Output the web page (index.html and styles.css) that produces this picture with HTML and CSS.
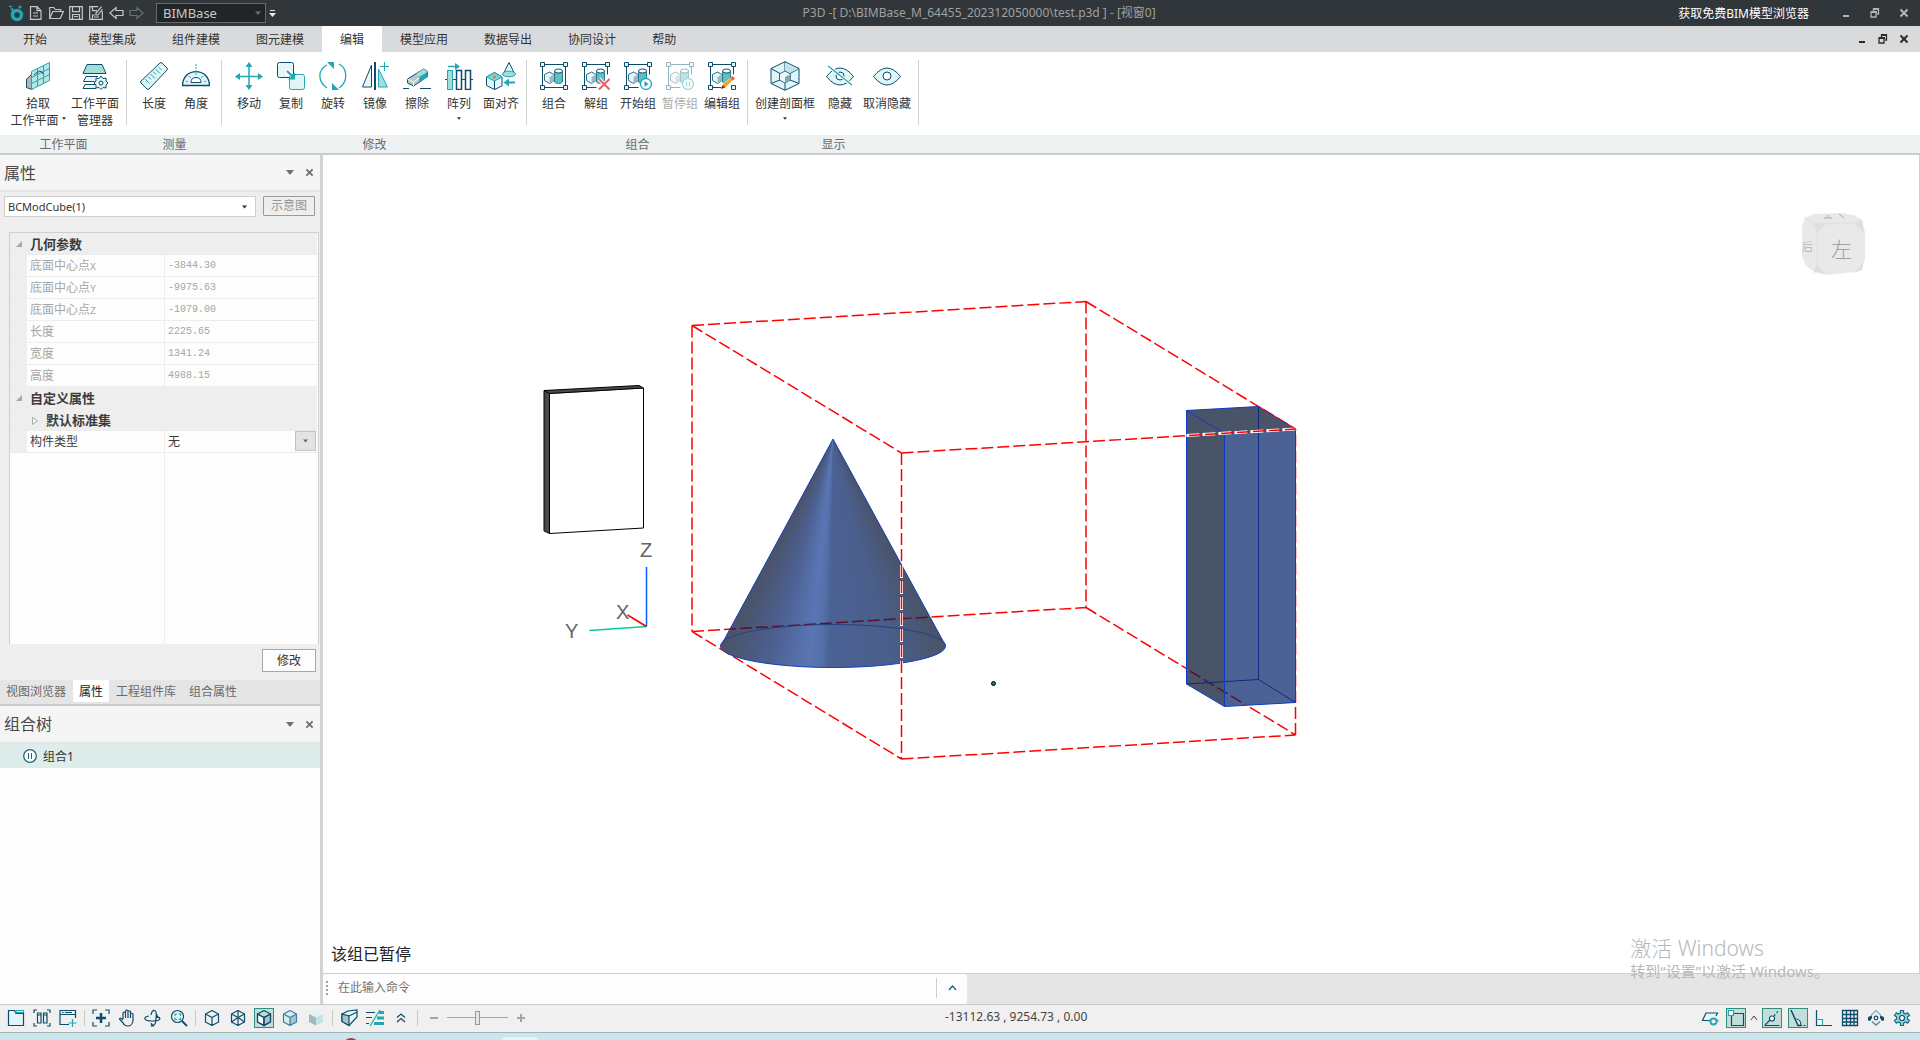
FILE: index.html
```html
<!DOCTYPE html>
<html lang="zh-CN">
<head>
<meta charset="utf-8">
<title>P3D - BIMBase</title>
<link rel="stylesheet" href="styles.css">
</head>
<body>
<svg class="defs" width="0" height="0" aria-hidden="true">
  <symbol id="frame" viewBox="0 0 28 28">
    <path d="M4.500 2.500h19M2.500 4.500v19M4.500 25.500h19M25.500 4.500v19" class="nv"/>
    <path d="M.5.5h4v4h-4zM23.500.5h4v4h-4zM.5 23.500h4v4h-4zM23.500 23.500h4v4h-4z" class="nv lt"/>
    <use href="#solids" width="28" height="28"/>
  </symbol>
  <symbol id="frame-open" viewBox="0 0 28 28">
    <path d="M4.500 2.500h19M2.500 4.500v19M4.500 25.500h10M25.500 4.500v8" class="nv"/>
    <path d="M.5.5h4v4h-4zM23.500.5h4v4h-4zM.5 23.500h4v4h-4z" class="nv lt"/>
    <use href="#solids" width="28" height="28"/>
  </symbol>
  <symbol id="solids" viewBox="0 0 28 28">
    <path d="M14.500 9v11c2 2 6 2 8 0V9z" fill="#5fc0c0" stroke="#2b7f92"/>
    <ellipse cx="18.500" cy="9" rx="4" ry="2" fill="#fff" stroke="#0f4c6c"/>
    <path d="M4.500 12.500l5-2.500 4.500 2.500v6l-4.500 3-5-3z" fill="#e8f6f8" stroke="#2b6f8a"/>
    <path d="M9.500 15l4.500-2.500v6l-4.500 3z" fill="#9fb9c2"/>
  </symbol>
  <symbol id="cube" viewBox="0 0 18 18">
    <path d="M9 1.500l6.500 3.500v8L9 16.500 2.500 13V5zM2.500 5L9 8.500 15.500 5M9 8.500v8" stroke-linejoin="round"/>
  </symbol>
  <symbol id="chev" viewBox="0 0 8 5"><path d="M0 0h8L4 5z" fill="currentColor"/></symbol>
  <symbol id="cross" viewBox="0 0 10 10"><path d="M1.500 1.500l7 7M8.500 1.500l-7 7" stroke="currentColor" stroke-width="2"/></symbol>
  <symbol id="restore" viewBox="0 0 10 10"><path d="M3.500 3V1h5v5H7M1 4h5v5H1z" fill="none" stroke="currentColor" stroke-width="1.300"/><path d="M3 1h6M1 4h6" stroke="currentColor" stroke-width="2"/></symbol>
  <symbol id="mini" viewBox="0 0 10 10"><path d="M2 8h6" stroke="currentColor" stroke-width="2"/></symbol>
</svg>

<div class="app">
  <header class="titlebar">
    <div class="quick">
      <span class="qbtn"><svg width="16" height="18" viewBox="0 0 16 18"><circle cx="9" cy="11" r="4.500" fill="none" stroke="#20a8b4" stroke-width="3.500"/><path d="M4.500 10V4M1 2.500h3M2.500 5.500h2M10.500 3h3M12 1.500v3" fill="none" stroke="#20a8b4" stroke-width="1.500"/></svg></span>
      <button class="qbtn" aria-label="新建"><svg width="14" height="14" viewBox="0 0 14 14"><path d="M1.500.7H8l4 4v8.600H1.500zM8 .7v4h4M4 7h5M4 10h5"/></svg></button>
      <button class="qbtn" aria-label="打开"><svg width="15" height="14" viewBox="0 0 15 14"><path d="M.7 12.500v-11h4l1.500 2h5.500v2M.7 12.500l3-7h10.600l-3 7z"/></svg></button>
      <button class="qbtn" aria-label="保存"><svg width="14" height="14" viewBox="0 0 14 14"><path d="M.7.7h12.600v12.600H.7zM3.500.7v5h7v-5M3.500 13V8.500h7V13M5 10.500h4"/></svg></button>
      <button class="qbtn" aria-label="另存为"><svg width="14" height="14" viewBox="0 0 14 14"><path d="M9 .7H.7v12.600h12.600V5M3.500.7v4H8M3.500 13V9H6M12.500.7L7 7v2h2l4.500-6M5 11h5"/></svg></button>
      <button class="qbtn" aria-label="撤销"><svg width="15" height="14" viewBox="0 0 15 14"><path d="M7 1.500v3h7v5H7v3L.9 7z"/></svg></button>
      <button class="qbtn dim" aria-label="重做"><svg width="15" height="14" viewBox="0 0 15 14"><path d="M8 1.500v3H1v5h7v3L14.100 7z"/></svg></button>
    </div>
    <div class="style-box">
      <select aria-label="模块"><option>BIMBase</option></select>
      <svg width="6" height="4" viewBox="0 0 8 5"><use href="#chev"/></svg>
    </div>
    <button class="qmore" aria-label="自定义"><svg width="7" height="7" viewBox="0 0 7 7"><path d="M1 0h5v1H1zM0 3h7L3.500 7z" fill="#eee"/></svg></button>
    <h1 class="doc-title">P3D -[ D:\BIMBase_M_64455_202312050000\test.p3d ] - [视窗0]</h1>
    <a class="get-link" href="#">获取免费BIM模型浏览器</a>
    <div class="winbtns">
      <button aria-label="最小化"><svg width="10" height="10"><use href="#mini"/></svg></button>
      <button aria-label="还原"><svg width="10" height="10"><use href="#restore"/></svg></button>
      <button aria-label="关闭"><svg width="10" height="10"><use href="#cross"/></svg></button>
    </div>
  </header>

  <nav class="menubar">
    <button class="menu first">开始</button><button class="menu">模型集成</button><button class="menu">组件建模</button><button class="menu">图元建模</button><button class="menu active">编辑</button><button class="menu">模型应用</button><button class="menu">数据导出</button><button class="menu">协同设计</button><button class="menu">帮助</button>
    <div class="winbtns child">
      <button aria-label="最小化视窗"><svg width="10" height="10"><use href="#mini"/></svg></button>
      <button aria-label="还原视窗"><svg width="10" height="10"><use href="#restore"/></svg></button>
      <button aria-label="关闭视窗"><svg width="10" height="10"><use href="#cross"/></svg></button>
    </div>
  </nav>

  <section class="ribbon">
    <div class="group g-plane">
      <div class="tools">
        <button class="tool"><svg width="28" height="28" viewBox="0 0 28 28"><path d="M2.500 17l5-4.500 5 2v10l-5 3-5-2z" fill="#a9b9bd" stroke="#0f4c6c"/><path d="M7.500 9.500L25.500.5v18l-18 9z" fill="#b5e6e4" stroke="#20a8b4"/><path d="M13.500 6.500v18M19.500 3.500v18M7.500 15.500l18-9M7.500 21.500l18-9" class="tl"/><path d="M10 13q7-7 9-1" class="nv"/></svg><span>拾取<br>工作平面<svg class="drop" width="4" height="3"><use href="#chev"/></svg></span></button>
        <button class="tool w58"><svg width="28" height="28" viewBox="0 0 28 28"><path d="M6 2.500h15l4 9H2z" fill="#9fdedb" stroke="#0f4c6c"/><path d="M17 14.500H5l-2.500 5h11M14 22.500H4l-2 4h13" class="nv lt"/><path d="M20 14l2 2.500 3-.5 0 3 2 2-2 2 0 3-3-.5-2 2-2-2-3 .5 0-3-2-2 2-2 0-3 3 .5z" fill="#dff5f8" stroke="#0f4c6c"/><circle cx="20" cy="21" r="2" class="nv"/></svg><span>工作平面<br>管理器</span></button>
        <i class="sep"></i>
      </div>
      <div class="group-name">工作平面</div>
    </div>
    <div class="group g-std">
      <div class="tools">
        <button class="tool w42"><svg width="28" height="28" viewBox="0 0 28 28"><path d="M1 19L20 1q1-1 2 0l5 5q1 1 0 2L9 27q-1 1-2 0l-6-6q-1-1 0-2z" fill="#dff5f8" stroke="#0f4c6c"/><path d="M5 17l4.500 4.500M8 14.500l3 3M10.500 12l4.500 4.500M13 9.500l3 3M15.500 7l4.500 4.500M18.500 5l3 3" class="tl"/></svg><span>长度</span></button>
        <button class="tool w42"><svg width="28" height="28" viewBox="0 0 28 28"><path d="M.5 23.500C1 5 27 5 27.500 23.500z" fill="#dff5f8" stroke="#0f4c6c" stroke-width="1.300"/><path d="M9 20.500q0-5 5-5t5 5z" fill="#fff" stroke="#0f4c6c"/><path d="M14 2v11" class="tl" stroke-dasharray="2 1"/><path d="M4 19l2 1M24 19l-2 1M7 14l2 2M21 14l-2 2" class="tl"/></svg><span>角度</span></button>
        <i class="sep"></i>
      </div>
      <div class="group-name">测量</div>
    </div>
    <div class="group g-std">
      <div class="tools">
        <button class="tool w42"><svg width="28" height="28" viewBox="0 0 28 28"><path d="M14 2v24M2 14.500h24" class="tl" stroke-width="1.500"/><path d="M14 0l3.500 5h-7zM14 28l3.500-5h-7zM0 14.500l5-3.500v7zM28 14.500l-5-3.500v7z" fill="#20a8b4"/></svg><span>移动</span></button>
        <button class="tool w42"><svg width="28" height="28" viewBox="0 0 28 28"><rect x=".5" y=".5" width="16" height="15" rx="2" fill="#e4f7fa" stroke="#0f4c6c"/><rect x="12.500" y="12.500" width="15" height="15" rx="2" fill="#dff5f8" stroke="#20a8b4"/><path d="M9 8h5v6h-5z" fill="#fff"/><path d="M10 9l6 6" stroke="#20a8b4" stroke-width="2"/><path d="M18 10.500v7h-7z" fill="#20a8b4"/></svg><span>复制</span></button>
        <button class="tool w42"><svg width="28" height="28" viewBox="0 0 28 28"><path d="M8 26C-1 20-2 8 8 3M20 2c9 5 9 18 0 24" class="tl" stroke-width="1.300"/><path d="M8 0h7v7zM13 21v7h7z" fill="#20a8b4"/></svg><span>旋转</span></button>
        <button class="tool w42"><svg width="28" height="28" viewBox="0 0 28 28"><path d="M10.500 3v22H1.500z" fill="#e4f7fa" stroke="#0f4c6c"/><path d="M17.500 7v18h9z" fill="#9fdedb" stroke="#20a8b4"/><path d="M14 0v28" stroke="#0f4c6c" stroke-width="2"/><path d="M23.500 0v9M19 4.500h9" class="tl"/></svg><span>镜像</span></button>
        <button class="tool w42"><svg width="28" height="28" viewBox="0 0 28 28"><path d="M4.500 17l16-10 4 2.500v5l-14 9.500-6-3z" fill="#b8c8cc" stroke="#0f4c6c"/><path d="M13 12l7.500-5 4 2.500-8 5z" fill="#9fdedb"/><path d="M16 15l8.500-5v5L16 21z" fill="#20a8b4"/><path d="M4.500 17l6 3v4M10.500 20l6-4" stroke="#fff" fill="none"/><path d="M0 26.500h6M17 26.500h11" class="nv"/></svg><span>擦除</span></button>
        <button class="tool w42"><svg width="28" height="28" viewBox="0 0 28 28"><rect x="2.500" y="8.500" width="5" height="19" fill="#9fdedb" stroke="#20a8b4"/><path d="M11.500 8.500h5v19h-5zM20.500 8.500h5v19h-5z" class="nv" stroke-width="1.500"/><path d="M0 17.500h2M8 17.500h3.500M16.500 17.500h4M25.500 17.500H28" class="nv"/><path d="M3 4.500h8" stroke="#20a8b4" stroke-width="1.500"/><path d="M10 1l5 3.500-5 3.500z" fill="#20a8b4"/></svg><span>阵列<br><svg class="drop low" width="4" height="3"><use href="#chev"/></svg></span></button>
        <button class="tool w42"><svg width="30" height="28" viewBox="0 0 30 28"><path d="M.5 15l8-4.500 7.500 4.500v9L8.500 27.500l-8-4z" fill="#e4f7fa" stroke="#0f4c6c"/><path d="M.5 15l8-4.500 7.500 4.500-7.500 4z" fill="#7fd3c8" stroke="#20a8b4"/><path d="M8.500 19v8.500" stroke="#0f4c6c"/><circle cx="8.500" cy="15" r="1.200" fill="#f25b5b"/><path d="M23 .5l6 12q-6 4-12 0z" fill="#dff5f8" stroke="#0f4c6c"/><ellipse cx="23" cy="12" rx="6.500" ry="2.800" fill="#9fdedb" stroke="#20a8b4"/><path d="M22 20.500h7" stroke="#20a8b4" stroke-width="2"/><path d="M17.500 20.500l5.500-4v8z" fill="#20a8b4"/></svg><span>面对齐</span></button>
        <i class="sep"></i>
      </div>
      <div class="group-name">修改</div>
    </div>
    <div class="group g-std">
      <div class="tools">
        <button class="tool w42"><svg width="28" height="28"><use href="#frame"/></svg><span>组合</span></button>
        <button class="tool w42"><svg width="28" height="28" viewBox="0 0 28 28"><use href="#frame-open"/><path d="M17 17l10.500 10.500M27.500 17L17 27.500" stroke="#fff" stroke-width="4"/><path d="M17 17l10.500 10.500M27.500 17L17 27.500" stroke="#f25b5b" stroke-width="2"/></svg><span>解组</span></button>
        <button class="tool w42"><svg width="28" height="28" viewBox="0 0 28 28"><use href="#frame-open"/><circle cx="22" cy="22" r="5.500" fill="#fff" stroke="#20a8b4" stroke-width="1.300"/><path d="M20.500 19l4 3-4 3z" fill="#20a8b4"/></svg><span>开始组</span></button>
        <button class="tool w42" disabled><svg width="28" height="28" viewBox="0 0 28 28"><use href="#frame-open"/><circle cx="22" cy="22" r="5.500" fill="#fff" stroke="#20a8b4" stroke-width="1.300"/><path d="M20.500 19.500v5M23.500 19.500v5" stroke="#20a8b4" stroke-width="1.300"/></svg><span>暂停组</span></button>
        <button class="tool w42"><svg width="28" height="28" viewBox="0 0 28 28"><use href="#frame-open"/><path d="M23.500 23.500h4v4h-4z" class="nv lt"/><path d="M13 27l2-5 9-7 2 2-8 8z" fill="#f5a21d" stroke="#fff" stroke-width=".5"/><path d="M22.500 16l2-2 2.500 2.500-2 2z" fill="#f25b5b"/><path d="M13 27l1.500-4 3 2.500z" fill="#6b3a1e"/></svg><span>编辑组</span></button>
        <i class="sep"></i>
      </div>
      <div class="group-name">组合</div>
    </div>
    <div class="group g-show">
      <div class="tools">
        <button class="tool w66"><svg class="tall" width="30" height="30" viewBox="0 0 30 30"><path d="M15 .7l14 6.800v15L15 29.300 1 22.500v-15z" fill="#dff5f8" stroke="#0f4c6c"/><path d="M15 .7v10M1 7.500l9 5M29 7.500l-9 5M1 22.500l9-3.500M29 22.500L20 19M15 22v7" class="nv"/><path d="M15 2l13 6-8 4-5-2z" fill="#bfe3e8"/><path d="M9.500 13l5.500-3 5.500 3v6L15 22l-5.500-3z" fill="#eef8fa" stroke="#2b6f8a"/><path d="M15 16l5.500-3v6L15 22z" fill="#8ba6b0"/></svg><span>创建剖面框<br><svg class="drop low" width="4" height="3"><use href="#chev"/></svg></span></button>
        <button class="tool w44"><svg width="28" height="28" viewBox="0 0 28 28"><path d="M.5 14.500q13.500-17 27 0-13.500 17-27 0z" fill="#dff5f8" stroke="#0f4c6c"/><circle cx="14" cy="14" r="4" fill="#fff" stroke="#0f4c6c"/><path d="M2 4l24 19" stroke="#fff" stroke-width="3"/><path d="M2 4l24 19" class="tl" stroke-width="1.300"/></svg><span>隐藏</span></button>
        <button class="tool w50"><svg width="28" height="28" viewBox="0 0 28 28"><path d="M.5 14.500q13.500-17 27 0-13.500 17-27 0z" fill="#dff5f8" stroke="#0f4c6c"/><circle cx="14" cy="14" r="4" fill="#fff" stroke="#0f4c6c"/></svg><span>取消隐藏</span></button>
        <i class="sep"></i>
      </div>
      <div class="group-name">显示</div>
    </div>
    <div class="group rest"><div class="tools"></div><div class="group-name"></div></div>
  </section>

  <main class="work">
    <aside class="side">
      <section class="panel props">
        <div class="panel-head"><h2>属性</h2><button aria-label="菜单"><svg width="8" height="5"><use href="#chev"/></svg></button><button aria-label="关闭属性"><svg width="9" height="9"><use href="#cross"/></svg></button></div>
        <div class="pick">
          <div class="combo"><select aria-label="对象"><option>BCModCube(1)</option></select><svg width="5" height="4"><use href="#chev"/></svg></div>
          <button class="sketch">示意图</button>
        </div>
        <div class="sheet">
          <table>
            <colgroup><col class="c0"><col class="c1"><col></colgroup>
            <tr class="sec"><td><svg width="6" height="6" viewBox="0 0 6 6"><path d="M6 0v6H0z" fill="#a8a8a8"/></svg></td><th colspan="2">几何参数</th></tr>
            <tr><td></td><td>底面中心点<span class="num">X</span></td><td class="num">-3844.30</td></tr>
            <tr><td></td><td>底面中心点<span class="num">Y</span></td><td class="num">-9975.63</td></tr>
            <tr><td></td><td>底面中心点<span class="num">Z</span></td><td class="num">-1079.00</td></tr>
            <tr><td></td><td>长度</td><td class="num">2225.65</td></tr>
            <tr><td></td><td>宽度</td><td class="num">1341.24</td></tr>
            <tr><td></td><td>高度</td><td class="num">4988.15</td></tr>
            <tr class="sec"><td><svg width="6" height="6" viewBox="0 0 6 6"><path d="M6 0v6H0z" fill="#a8a8a8"/></svg></td><th colspan="2">自定义属性</th></tr>
            <tr class="sec sub"><td></td><th colspan="2"><svg width="6" height="8" viewBox="0 0 6 8"><path d="M.5.5l5 3.500-5 3.500z" fill="#fff" stroke="#aaa"/></svg>默认标准集</th></tr>
            <tr class="edit"><td></td><td><label for="ctype">构件类型</label></td><td><div class="cell-combo"><select id="ctype"><option>无</option></select><span><svg width="5" height="4"><use href="#chev"/></svg></span></div></td></tr>
          </table>
          <div class="blank"><div></div></div>
        </div>
        <div class="apply"><button>修改</button></div>
        <div class="side-tabs"><button>视图浏览器</button><button class="on">属性</button><button>工程组件库</button><button>组合属性</button></div>
      </section>
      <section class="panel tree">
        <div class="panel-head"><h2>组合树</h2><button aria-label="菜单"><svg width="8" height="5"><use href="#chev"/></svg></button><button aria-label="关闭组合树"><svg width="9" height="9"><use href="#cross"/></svg></button></div>
        <ul><li><svg width="14" height="14" viewBox="0 0 14 14"><circle cx="7" cy="7" r="6.300" fill="#fff" stroke="#1f6685" stroke-width="1.300"/><path d="M5.500 4v6M8.500 4v6" stroke="#1f6685"/></svg>组合1</li></ul>
      </section>
    </aside>

    <div class="stage">
      <div class="viewport">
        <svg class="scene" viewBox="323 155 1596 818">
          <defs><clipPath id="coneClip"><path d="M833 439L720.500 646.500A112.500 21.500 0 0 0 945.500 645.500z"/></clipPath></defs>
          <path d="M544 390.500l95-5 4.500 3-94 5.500z" fill="#4a4a4a"/><path d="M544 390.500l5.500 3V533.500l-5.500-3z" fill="#4a4a4a"/>
          <path d="M549.500 393.500l94-5.500v140l-94 5.500zM549.500 393.500l-5.500-3V531l5.500 2.500M544 390.500l95-5 4.500 2.500" fill="none" stroke="#000"/>
          <path d="M646.500 626.500v-59.500" stroke="#0a60ff" stroke-width="1.500"/><path d="M646.500 626.500l-57 4" stroke="#00cfa2" stroke-width="1.500"/><path d="M646.500 626.500l-19-11.500" stroke="#f00" stroke-width="1.500"/>
          <g class="axis"><text x="640" y="557">Z</text><text x="616" y="619">X</text><text x="565" y="638">Y</text></g>
          <g class="dash">
            <path d="M692 325.500l394-24M1086 301.500V607.500M1086 301.500l209.500 127.500M692 325.500v306M692 325.500l209.500 127.500M692 631.500l394-24M692 631.500l209.500 127.500M901.500 759l394-24M1086 607.500l209.500 127.500M1295.500 735V429"/>
          </g>
          <g clip-path="url(#coneClip)">
            <foreignObject x="720" y="439" width="226" height="230"><div class="cone-fill"></div></foreignObject>
            <path d="M692 631.500l394-24" stroke="#5c0f2e" stroke-width="1.500" stroke-dasharray="12 4"/>
          </g>
          <path d="M720.500 646.500A112.500 21.500 0 0 1 945.500 645.500" fill="none" stroke="#2a3f80" stroke-width="1"/>
          <path d="M833 439L720.500 646.500A112.500 21.500 0 0 0 945.500 645.500z" fill="none" stroke="#1040c0"/>
          <path d="M1186.500 410.500l72-4 37 22.500-71 4.500zM1186.500 410.500l38 23v273l-38-22.500z" fill="#4a5468"/>
          <path d="M1224.500 433.500l71-4.500v273.500l-71 4z" fill="#4d6294"/>
          <path d="M1190 671l55 33.500" stroke="#5c0f2e" stroke-width="1.500" stroke-dasharray="12 4"/>
          <path d="M1258.500 406.500v273l37 23M1258.500 679.500l-72 4.500" fill="none" stroke="#082a85"/>
          <path d="M1186.500 410.500l72-4 37 22.500-71 4.500zM1186.500 410.500V684l38 22.500v-273M1224.500 706.500l71-4V429" fill="none" stroke="#0a3cc4"/>
          <path d="M901.500 565v99M1186.500 435.500l109-6.500" stroke="#fff" stroke-width="3" stroke-dasharray="13 3"/>
          <g class="dash"><path d="M901.500 453v306M901.500 453l394-24"/><path d="M1258.500 406.500l37 22.500" opacity=".5"/></g>
          <circle cx="993.500" cy="683.500" r="2" fill="#1d7a78" stroke="#000"/>
          <g class="viewcube">
            <path d="M1805 218l8-4 30-1 11 2 8 5 3 12v27l-3 9-7 4-28 3-12-3-9-6-4-10v-30z" fill="#e9e9e9"/>
            <path d="M1814 223l12 1-9 9zM1854 223l8-3 2 13zM1817 264l9 10-12-2zM1864 262l-2 8-8 3z" fill="#dedede"/>
            <path d="M1805 218l10 6 38-1 9-3M1815 224l2 9v32l-3 8" fill="none" stroke="#e0e0e0"/>
            <path d="M1824 218h8M1828 215v2M1839 214l5 4" stroke="#a5a5a5" fill="none"/>
            <text x="1831" y="257" font-size="21">左</text><text x="1802" y="251" font-size="11">后</text>
          </g>
        </svg>
        <p class="hint">该组已暂停</p>
      </div>
      <div class="cmd-row">
        <div class="cmd"><i class="grip"></i><input type="text" aria-label="命令" placeholder="在此输入命令"><button aria-label="展开"><svg width="9" height="6" viewBox="0 0 9 6"><path d="M1 5l3.500-4L8 5" fill="none" stroke="#1f5c80" stroke-width="1.300"/></svg></button></div>
      </div>
      <div class="watermark"><b>激活 Windows</b><span>转到“设置”以激活 Windows。</span></div>
    </div>
  </main>

  <footer class="status">
    <div class="icons">
      <button aria-label="文件"><svg width="18" height="18" viewBox="0 0 18 18"><path d="M1.500 16.500v-15h6l1.500 3h7.500v12z" fill="#dff5f8"/><path d="M9 1.500h7.500v2H9z" stroke="#20a8b4"/></svg></button>
      <button aria-label="平铺"><svg width="18" height="18" viewBox="0 0 18 18"><path d="M1 4V1h3M14 1h3v3M1 14v3h3M14 17h3v-3M4.500 4h3.500v10H4.500zM10.500 4H14v10h-3.500zM4.500 6H8M10.500 6H14"/></svg></button>
      <button aria-label="新建视窗"><svg width="18" height="18" viewBox="0 0 18 18"><path d="M16.500 9V1.500H1v14h9M1 5.500h15.500M3 3.500h1.500M6 3.500h7"/><path d="M13.500 10v8M9.500 14h8" stroke="#20a8b4"/></svg></button>
      <i></i>
      <button aria-label="全图"><svg width="18" height="18" viewBox="0 0 18 18"><path d="M1 5V1h4M13 1h4v4M1 13v4h4M13 17h4v-4"/><path d="M9 4v10M4 9h10" stroke-width="2.500"/></svg></button>
      <button aria-label="平移"><svg width="18" height="18" viewBox="0 0 18 18"><path d="M5 10V4q1.200-2 2.500 0V2q1.200-2 2.500 0v2-1.500q1.300-1.500 2.500 0V5q1.300-1.500 2.500 0v7q-1 5-5 5-3.500 0-5-3L1.500 10q1-2 3.500 1M7.500 4v5M10 3v6M12.500 5v4" stroke-linejoin="round"/></svg></button>
      <button aria-label="旋转视图"><svg width="18" height="18" viewBox="0 0 18 18"><path d="M7 6q1-5 3.500-4.500T12 9q0 7-3 7.500L7 14M5 7q-5 1-4 3t7 2q8 0 8-2.500L13 7M7.500 14.500v2.500h2.500M13 5.500v3h3"/></svg></button>
      <button aria-label="窗选缩放"><svg width="18" height="18" viewBox="0 0 18 18"><circle cx="7.500" cy="7.500" r="6" fill="#e4f7fa"/><path d="M12 12l5 5" stroke-width="1.800"/><path d="M5 7V5h2M8.500 5h2v2M5 8.500v2h2M10.500 8.500v2h-2" stroke="#20a8b4"/></svg></button>
      <i></i>
      <button aria-label="线框"><svg width="18" height="18" fill="#fff"><use href="#cube"/></svg></button>
      <button aria-label="透明线框"><svg width="18" height="18" viewBox="0 0 18 18"><use href="#cube"/><path d="M9 1.500v7L2.500 13M9 8.500l6.500 4.500"/></svg></button>
      <button class="on" aria-label="真实感"><svg width="18" height="18" viewBox="0 0 18 18"><path d="M2.500 5L9 8.500v8L2.500 13z" fill="#fff"/><path d="M9 8.500L15.500 5v8L9 16.500z" fill="#a9c4c8"/><use href="#cube"/></svg></button>
      <button aria-label="着色"><svg width="18" height="18" viewBox="0 0 18 18" class="flat"><path d="M2.500 5L9 1.500 15.500 5v8L9 16.500 2.500 13z" fill="#d3edf1"/><path d="M9 8.500L15.500 5v8L9 16.500z" fill="#a9c4cc"/><use href="#cube" stroke="#3f7d9e"/></svg></button>
      <button aria-label="着色无边"><svg width="18" height="18" viewBox="0 0 18 18" class="flat"><path d="M2 5l7-3.500L16 5 9 8.500z" fill="#dff5f8"/><path d="M2 5l7 3.500v8L2 13z" fill="#a3b9be"/><path d="M9 8.500L16 5v8l-7 3.500z" fill="#c3e3e6"/></svg></button>
      <i></i>
      <button aria-label="剖切"><svg width="18" height="18" viewBox="0 0 18 18"><path d="M2 5l6-3 9-1v7l-8 8.500-7-4z" fill="#e4f7fa"/><path d="M2 5l7 2v9.500l-7-4z" fill="#a9c0c4"/><path d="M9 7l8-4"/></svg></button>
      <button aria-label="线宽"><svg width="18" height="18" viewBox="0 0 18 18"><path d="M0 3.500h9M0 8.500h6M0 14.500h3"/><path d="M4 17L14 1" stroke="#20a8b4"/><path d="M13 3.500h5M11 9h7M8 14.500h10" stroke="#20a8b4" stroke-width="3"/></svg></button>
      <button aria-label="更多"><svg width="18" height="18" viewBox="0 0 18 18"><path d="M5 8.500L9 5l4 3.500M5 13l4-3.500 4 3.500"/></svg></button>
      <i></i>
    </div>
    <div class="zoom"><button aria-label="缩小"><svg width="8" height="8" viewBox="0 0 8 8"><path d="M0 4h8"/></svg></button><input type="range" aria-label="缩放" min="0" max="100" value="50"><button aria-label="放大"><svg width="8" height="8" viewBox="0 0 8 8"><path d="M0 4h8M4 0v8"/></svg></button></div>
    <output class="coords">-13112.63 , 9254.73 , 0.00</output>
    <div class="icons right">
      <button aria-label="显示平面"><svg width="18" height="18" viewBox="0 0 18 18"><path d="M9 11.500H1.500L5 4h11.500L15 7" fill="#e4f7fa"/><circle cx="12.500" cy="12.500" r="3" stroke="#20a8b4" stroke-width="1.800"/><path d="M7.500 12.500l2-2M17.500 12.500l-2-2" stroke="#20a8b4"/></svg></button>
      <button class="on" aria-label="捕捉"><svg width="18" height="18" viewBox="0 0 18 18"><path d="M7 4.500h9.500v12h-12V7"/><path d="M1.500 1.500h5v5h-5z" fill="#fff" stroke="#20a8b4"/></svg></button>
      <button class="tiny" aria-label="捕捉设置"><svg width="8" height="6" viewBox="0 0 8 6"><path d="M1 5l3-4 3 4"/></svg></button>
      <button class="on" aria-label="极轴"><svg width="18" height="18" viewBox="0 0 18 18"><path d="M1.500 16.500h15M2 16l5-5"/><circle cx="9" cy="9.500" r="2.500" fill="#fff"/><path d="M11 7l5-6" stroke-dasharray="2 2"/></svg></button>
      <button class="on" aria-label="角度"><svg width="18" height="18" viewBox="0 0 18 18"><path d="M2 1l7 15.500h3" stroke-width="1.500"/><path d="M6.500 10q5 0 5.500 6" fill="#fff"/><path d="M11 16.500h6" stroke-dasharray="2 1.500"/></svg></button>
      <button aria-label="正交"><svg width="18" height="18" viewBox="0 0 18 18"><path d="M1.500 1v15.500H17"/><path d="M1.500 10.500h6v6" fill="#fff" stroke="#20a8b4"/></svg></button>
      <button aria-label="栅格"><svg width="18" height="18" viewBox="0 0 18 18"><path d="M1.500 1.500h15v15h-15zM5.500 1.500v15M9.500 1.500v15M13 1.500v15M1.500 5.500h15M1.500 9.500h15M1.500 13h15" stroke-width="1.300"/></svg></button>
      <button aria-label="视点"><svg width="18" height="18" viewBox="0 0 18 18"><path d="M4 6.500l5-5 5 5" stroke="#9ab3bf" stroke-width="1.500"/><circle cx="9" cy="9" r="1.800"/><path d="M5 12.500l4 3.500 4-3.500" stroke="#5d87a0" stroke-width="1.500"/><path d="M1 8l4-1.500V9L3 12 1 11.500zM17 8l-4-1.500V9l2 3 2-.5z" fill="#0f4c6c" stroke="none"/></svg></button>
      <button aria-label="设置"><svg width="18" height="18" viewBox="0 0 18 18"><path d="M7.500 1.500h3v2.300l2.200 1.200 2-1.200L16.500 6.500l-2 1.300v2.400l2 1.300-1.800 2.700-2-1.200-2.200 1.200v2.300h-3v-2.300L5.300 13l-2 1.200L1.500 11.500l2-1.300V7.800l-2-1.300 1.800-2.700 2 1.200 2.200-1.200z" fill="#8fd6dc" stroke="#1f6685"/><circle cx="9" cy="9" r="2.500" fill="#fff"/></svg></button>
    </div>
  </footer>
  <div class="taskbar"><svg width="600" height="7" viewBox="0 0 600 7"><circle cx="351" cy="13" r="8" fill="#a83a45"/><rect x="502" y="4" width="36" height="8" rx="3" fill="#e3f3f6"/></svg></div>
</div>
</body>
</html>
```
FILE: styles.css
```css
* { box-sizing: border-box; }
body {
  margin: 0;
  background: #fff;
  color: #333;
  font: 12px/17px "Noto Sans", "Noto Sans CJK SC", sans-serif;
}
h1, h2, p, ul { margin: 0; padding: 0; font-weight: normal; }
ul { list-style: none; }
button, select, input {
  margin: 0; padding: 0; border: 0; border-radius: 0;
  background: transparent; color: inherit; font: inherit; outline: 0;
}
select { appearance: none; }
svg { display: block; }
.defs { position: absolute; }
.nv { fill: none; stroke: #0f4c6c; }
.tl { fill: none; stroke: #20a8b4; }
.lt { fill: #e4f7fa; }

.app { display: flex; flex-direction: column; height: 100vh; overflow: hidden; }

/* title bar */
.titlebar {
  display: flex; align-items: center; flex: none;
  height: 26px; padding-left: 6px; background: #30363a; color: #a0a0a0;
}
.quick { display: flex; }
.qbtn { display: flex; justify-content: center; align-items: center; width: 20px; height: 20px; }
button.qbtn svg { fill: none; stroke: #c4c8ca; stroke-width: 1.2; }
button.qbtn.dim svg { stroke: #6c7174; }
.style-box {
  display: flex; align-items: center; width: 110px; height: 20px;
  margin-left: 10px; padding: 0 4px 0 6px;
  background: #222526; border: 1px solid #6a6a6a; color: #6f7375;
}
.style-box select { flex: 1; min-width: 0; font-size: 13px; line-height: 18px; color: #c8c8c8; }
.qmore { margin-left: 3px; }
.doc-title { flex: 1; text-align: center; font-size: 12px; line-height: 26px; padding-left: 124px; }
.get-link { color: #fff; text-decoration: none; margin-left: 120px; padding-right: 22px; }
.winbtns { display: flex; }
.winbtns button { display: flex; justify-content: center; width: 29px; color: #b4b4b4; }
.titlebar .winbtns { padding-right: 2px; }
.winbtns.child { margin-left: auto; align-items: center; padding-right: 6px; }
.winbtns.child button { width: 21px; color: #2a2a2a; }

/* ribbon tabs */
.menubar { display: flex; flex: none; height: 26px; background: #d9dadc; }
.menu { padding: 2px 18px 0; line-height: 24px; }
.menu.first { padding: 2px 23px 0; }
.menu.active { background: #fff; }

/* ribbon */
.ribbon { display: flex; flex: none; height: 103px; border-bottom: 2px solid #cbccce; }
.tools { display: flex; height: 83px; padding: 8px 0 0 6px; }
.g-plane .tools { padding-left: 10px; }
.g-plane .sep { margin-left: 2px; }
.g-show .tools { padding-left: 4px; }
.g-show .sep { margin-left: 6px; }
.sep { width: 1px; height: 65px; margin-left: 4px; background: #d2d2d2; }
.group-name { height: 18px; padding-top: 1px; line-height: 18px; text-align: center; background: #edf1f2; color: #6b6b6b; }
.rest { flex: 1; }
.tool { display: flex; flex-direction: column; align-items: center; gap: 5px; width: 56px; padding-top: 2px; white-space: nowrap; }
.tool .tall { margin: -1px 0; }
.tool .drop { display: inline-block; vertical-align: 5px; margin-left: 3px; }
.tool .drop.low { margin-left: 0; }
.tool:disabled { opacity: .42; }
.w58 { width: 58px; }
.w42 { width: 42px; }
.w66 { width: 66px; }
.w44 { width: 44px; }
.w50 { width: 50px; }

/* work area */
.work { display: flex; flex: 1; min-height: 0; }
.side {
  display: grid; grid-template-rows: 551fr 298fr; flex: none;
  width: 323px; border-right: 3px solid #d3d3d3; background: #fdfdfd;
}
.panel { display: flex; flex-direction: column; min-height: 0; }
.panel-head {
  display: flex; align-items: center; gap: 11px; flex: none; height: 37px;
  padding: 0 6px 0 4px; background: #f5f5f5; border-bottom: 2px solid #e6e6e6; color: #707070;
}
.panel-head h2 { flex: 1; font-size: 16px; line-height: 34px; color: #484848; }
.props { background: #eee; }
.pick { display: flex; gap: 7px; padding: 4px 5px 15px 4px; }
.combo { display: flex; align-items: center; flex: 1; height: 21px; padding: 0 8px 0 3px; background: #fff; border: 1px solid #cfcfcf; }
.combo select { flex: 1; font-size: 11px; }
.sketch { width: 52px; height: 20px; border: 1px solid #9a9a9a; border-radius: 1px; color: #949494; line-height: 18px; }
.sheet { display: flex; flex-direction: column; flex: 1; min-height: 0; margin: 0 1px 0 9px; padding-right: 1px; background: #fdfdfd; border: 1px solid #cfcfcf; border-bottom: 0; }
.sheet table { width: 100%; border-spacing: 0; table-layout: fixed; color: #a6a6a6; }
.c0 { width: 17px; }
.c1 { width: 138px; }
.sheet tr { height: 22px; }
.sheet td, .sheet th { height: 22px; padding: 0 0 0 3px; line-height: 20px; border-bottom: 1px solid #ececec; text-align: left; }
.sheet td:first-child { background: #eee; }
.sheet td:nth-child(2) { border-right: 1px solid #ececec; }
.sheet td:first-child svg { margin-left: 3px; }
.sheet .sec th { background: #eee; color: #3c3c3c; font-size: 13px; font-weight: bold; }
.sheet .sub svg { display: inline-block; margin: 0 8px 0 2px; }
.sheet .edit { color: #3c3c3c; }
.num { font-family: "Liberation Mono", monospace; font-size: 10px; }
span.num { line-height: 10px; }
.cell-combo { display: flex; height: 21px; }
.cell-combo select { flex: 1; }
.cell-combo span { display: flex; align-items: center; justify-content: center; width: 21px; height: 20px; margin-right: 1px; background: #e3e3e3; border: 1px solid #c2c2c2; color: #666; }
.blank { flex: 1; }
.blank div { width: 155px; height: 100%; border-right: 1px solid #ececec; }
.apply { display: flex; justify-content: flex-end; padding: 5px 4px 8px; }
.apply button { width: 54px; height: 23px; background: #fdfdfd; border: 1px solid #a8a8a8; line-height: 21px; }
.side-tabs { display: flex; gap: 1px; flex: none; height: 26px; padding-bottom: 2px; background: #e5e5e5; border-bottom: 2px solid #cbcbcb; color: #6a6a6a; }
.side-tabs button { padding: 0 6px; line-height: 21px; }
.side-tabs .on { background: #fff; color: #222; }
.tree .panel-head { height: 38px; }
.tree li { display: flex; align-items: center; gap: 6px; height: 24px; padding-left: 23px; background: #deecea; }

/* model view */
.stage { position: relative; display: flex; flex-direction: column; flex: 1; min-width: 0; background: #e5e5e5; }
.viewport { position: relative; flex: 1; min-height: 0; background: #fff; border-right: 1px solid #d0d0d0; border-bottom: 1px solid #d0d0d0; }
.scene { width: 100%; height: 100%; }
.dash { fill: none; stroke: #f00; stroke-width: 1.5; stroke-dasharray: 12 4; }
.axis { font: 20px "Liberation Sans", sans-serif; fill: #666; }
.viewcube text { fill: #a0a0a0; font-weight: 300; }
.cone-fill {
  width: 226px; height: 230px;
  background: conic-gradient(at 113px 0, #4a5265 151deg, #4a5878 157deg, #4b5f8c 166deg, #4b6296 181deg, #5470a8 183deg, #5a75b3 186deg, #5570aa 189deg, #4c6091 196deg, #4a5878 203deg, #4a5265 209deg);
}
.hint { position: absolute; left: 8px; bottom: 7px; font-size: 16px; line-height: 24px; color: #222; }
.cmd-row { flex: none; height: 30px; }
.cmd { display: flex; align-items: center; width: 644px; height: 30px; padding-bottom: 2px; background: #fdfdfd; border-radius: 3px; }
.grip { width: 2px; height: 14px; margin: 0 10px 0 3px; background: repeating-linear-gradient(#a0a0a0 0 2px, transparent 2px 4px); }
.cmd input { flex: 1; line-height: 20px; }
.cmd input::placeholder { color: #747474; opacity: 1; }
.cmd button { display: flex; justify-content: center; align-items: center; width: 31px; height: 20px; border-left: 1px solid #cfcfcf; }
.watermark { position: absolute; right: 91px; bottom: 22px; display: flex; flex-direction: column; color: #b8b8b8; }
.watermark b { font-size: 21px; line-height: 24px; font-weight: 300; }
.watermark span { font-size: 15px; line-height: 22px; }

/* status bar */
.status { display: flex; align-items: center; flex: none; height: 29px; padding-bottom: 2px; background: #f0f0f0; border-top: 1px solid #cacaca; border-bottom: 1px solid #a5b2b6; }
.icons { display: flex; align-items: center; gap: 6px; padding-left: 6px; }
.icons button { display: flex; align-items: center; justify-content: center; width: 20px; height: 20px; }
.icons svg { flex: none; fill: none; stroke: #0f4c6c; stroke-width: 1.2; }
.icons .flat { stroke: none; }
.icons .on { background: #c3ded8; border: 1px solid #2f8f7f; }
.icons i { width: 1px; height: 16px; background: #c8c8c8; }
.icons .tiny { width: 4px; }
.icons .tiny svg { stroke: #444; stroke-width: 1; }
.icons.right { margin-left: auto; padding: 0 8px 0 0; }
.zoom { display: flex; align-items: center; gap: 9px; padding-left: 12px; }
.zoom svg { stroke: #a5a5a5; stroke-width: 2; }
.zoom input { appearance: none; width: 61px; height: 16px; background: linear-gradient(#a5a5a5, #a5a5a5) center / 100% 1px no-repeat; }
.zoom input::-webkit-slider-thumb { appearance: none; width: 5px; height: 14px; background: #e6e6e6; border: 1px solid #9a9a9a; }
.coords { margin-left: 420px; padding-bottom: 2px; color: #444; font-size: 12px; }
.taskbar { flex: none; height: 7px; background: #cae7ed; overflow: hidden; }
```
